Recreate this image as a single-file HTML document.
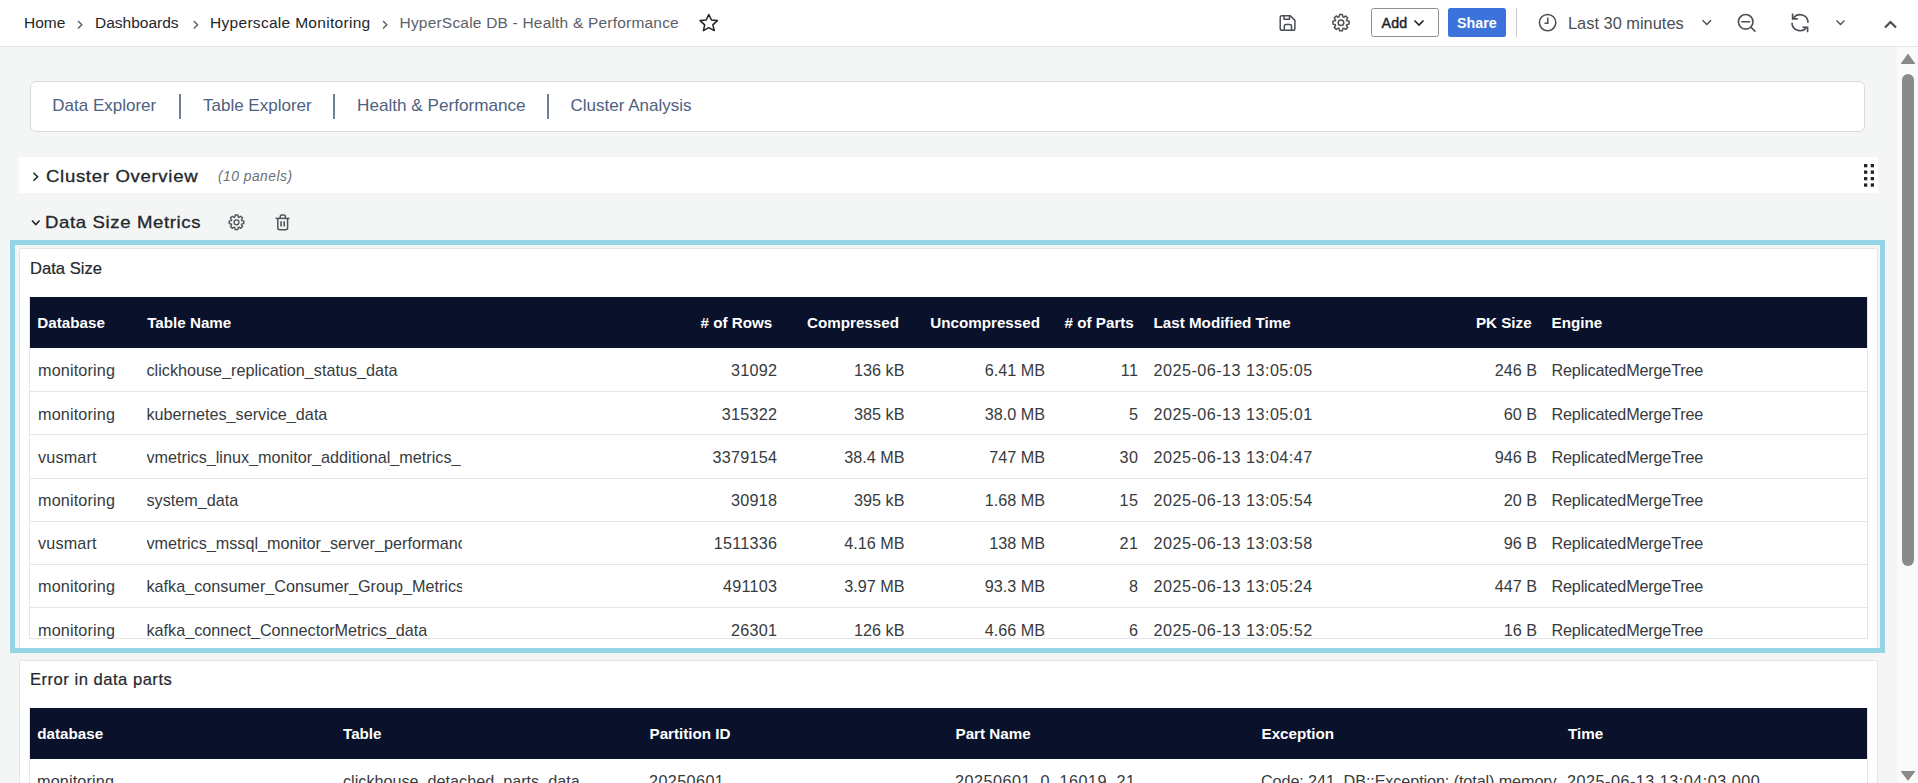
<!DOCTYPE html>
<html><head><meta charset="utf-8">
<style>
*{box-sizing:border-box;margin:0;padding:0}
html,body{width:1918px;height:783px;overflow:hidden;background:#f4f5f5;font-family:"Liberation Sans",sans-serif;color:#1f2328;position:relative}
.a{position:absolute;white-space:nowrap}
#hdr{position:absolute;left:0;top:0;width:1918px;height:47px;background:#fff;border-bottom:1px solid #e4e6e8}
.bc{font-size:15.5px;color:#22262a;top:14px;line-height:18px}
.sep{color:#555;}
.ico{position:absolute;overflow:visible}
.tabs{position:absolute;left:30px;top:81px;width:1835px;height:51px;background:#fff;border:1px solid #d6dae1;border-radius:6px}
.tab{font-size:17px;color:#4d6180;top:97.2px;line-height:18px}
.tdiv{position:absolute;top:94px;width:2px;height:25px;background:#6f7f94}
.row1{position:absolute;left:19px;top:157px;width:1859px;height:36px;background:#fff}
.sect{font-size:16.6px;color:#23272b;line-height:20px;letter-spacing:0.6px;-webkit-text-stroke:0.3px #23272b;transform:scaleX(1.12);transform-origin:0 0}
.panel{position:absolute;left:19px;width:1859px;background:#fff;border:1px solid #e3e5e6;border-radius:2px;overflow:hidden}
.ptitle{font-size:16.6px;color:#24282c;line-height:18px;-webkit-text-stroke:0.2px #24282c}
table{border-collapse:collapse;table-layout:fixed}
.tbl{position:absolute;left:29px;width:1838px;border-left:1px solid #e4e6e8;border-right:1px solid #e4e6e8}
.thd{position:absolute;background:#0a122b}
.th{font-size:15.2px;font-weight:bold;color:#fff;line-height:18px}
.td{font-size:16.2px;color:#373b40;line-height:18px}
.rs{position:absolute;height:1px;background:#e4e6e8}
</style></head><body>
<div id="hdr"></div>
<!-- breadcrumb -->
<div class="a bc" style="left:24px">Home</div>
<div class="a bc" style="left:95px">Dashboards</div>
<div class="a bc" style="left:210px;letter-spacing:0.3px">Hyperscale Monitoring</div>
<div class="a bc" style="left:399.5px;color:#5c6167;letter-spacing:0.2px">HyperScale DB - Health &amp; Performance</div>
<svg class="ico" style="left:0;top:0" width="1918" height="46">
  <g fill="none" stroke="#5a5e63" stroke-width="1.4">
    <path d="M78 21 L81.8 24.7 L78 28.4"/>
    <path d="M193.8 21 L197.6 24.7 L193.8 28.4"/>
    <path d="M383 21 L386.8 24.7 L383 28.4"/>
  </g>
  <path d="M708.75 14.5 L711.4 19.9 L717.4 20.6 L712.8 24.9 L714.3 30.6 L708.75 27.7 L703.4 30.6 L704.7 24.9 L700.1 20.6 L706.3 19.9 Z" fill="none" stroke="#1f2226" stroke-width="1.5" stroke-linejoin="round"/>
</svg>

<!-- header right -->
<svg class="ico" style="left:1260px;top:0" width="658" height="46" viewBox="1260 0 658 46">
  <g fill="none" stroke="#4b4f54" stroke-width="1.5" stroke-linejoin="round">
    <path d="M1282 15.8 H1290.3 L1294.9 20.4 V28.4 A1.8 1.8 0 0 1 1293.1 30.2 H1282 A1.8 1.8 0 0 1 1280.2 28.4 V17.6 A1.8 1.8 0 0 1 1282 15.8 Z"/>
    <path d="M1284 15.8 V19.3 H1289.5 V15.8"/>
    <path d="M1284.3 30.2 V26 A1.6 1.6 0 0 1 1285.9 24.4 H1289.9 A1.6 1.6 0 0 1 1291.5 26 V30.2"/>
  </g>
  <g id="gear1" transform="translate(1341 22.7)"><path fill="none" stroke="#4b4f54" stroke-width="1.5" stroke-linejoin="round" d="M-1.89 -5.80 L-1.42 -8.08 L1.42 -8.08 L1.89 -5.80 L2.77 -5.44 L4.70 -6.72 L6.72 -4.70 L5.44 -2.77 L5.80 -1.89 L8.08 -1.42 L8.08 1.42 L5.80 1.89 L5.44 2.77 L6.72 4.70 L4.70 6.72 L2.77 5.44 L1.89 5.80 L1.42 8.08 L-1.42 8.08 L-1.89 5.80 L-2.77 5.44 L-4.70 6.72 L-6.72 4.70 L-5.44 2.77 L-5.80 1.89 L-8.08 1.42 L-8.08 -1.42 L-5.80 -1.89 L-5.44 -2.77 L-6.72 -4.70 L-4.70 -6.72 L-2.77 -5.44 Z"/><circle r="2.8" fill="none" stroke="#4b4f54" stroke-width="1.5"/></g>
  <rect x="1371.5" y="8.5" width="67" height="28" rx="2" fill="#fff" stroke="#8d8f92"/>
  <rect x="1448" y="8" width="58" height="29" rx="2.5" fill="#3b72db"/>
  <path d="M1414.5 20.5 L1419 25 L1423.5 20.5" fill="none" stroke="#1f2328" stroke-width="1.6"/>
  <rect x="1516" y="8" width="1" height="29" fill="#c8cacd"/>
  <circle cx="1547.6" cy="22.6" r="8.2" fill="none" stroke="#4b4f54" stroke-width="1.5"/>
  <path d="M1547.8 17.5 V23.3 H1544.5" fill="none" stroke="#4b4f54" stroke-width="1.5"/>
  <path d="M1702.5 20.3 L1706.8 24.6 L1711.1 20.3" fill="none" stroke="#4b4f54" stroke-width="1.4"/>
  <circle cx="1745.7" cy="21.8" r="7.3" fill="none" stroke="#4b4f54" stroke-width="1.6"/>
  <path d="M1741.3 21.8 H1750.2 M1751 27.2 L1755.4 31.6" fill="none" stroke="#4b4f54" stroke-width="1.6"/>
  <path d="M1793.45 18.1 A8 8 0 0 1 1808 22.7" fill="none" stroke="#4b4f54" stroke-width="1.6"/>
  <path d="M1792 22.7 A8 8 0 0 0 1806.55 27.3" fill="none" stroke="#4b4f54" stroke-width="1.6"/>
  <path d="M1792.6 13.6 V18.9 H1797.8" fill="none" stroke="#4b4f54" stroke-width="1.6"/>
  <path d="M1802.4 27.2 H1807.6 V32.2" fill="none" stroke="#4b4f54" stroke-width="1.6"/>
  <path d="M1836.5 20.5 L1840.5 24.5 L1844.5 20.5" fill="none" stroke="#4b4f54" stroke-width="1.4"/>
  <path d="M1885 27.5 L1890.5 22 L1896 27.5" fill="none" stroke="#4b4f54" stroke-width="2.2"/>
</svg>
<div class="a" style="left:1381.5px;top:14.3px;font-size:14.2px;color:#1f2328;line-height:18px;-webkit-text-stroke:0.45px #1f2328;letter-spacing:0.25px">Add</div>
<div class="a" style="left:1457px;top:14px;font-size:14.3px;font-weight:bold;color:#fff;line-height:18px">Share</div>
<div class="a bc" style="left:1568px;color:#4b4f54;font-size:16.4px">Last 30 minutes</div>

<!-- scrollbar -->
<div style="position:absolute;left:1897px;top:47px;width:21px;height:736px;background:#fafafa"></div>
<div style="position:absolute;left:1902px;top:74px;width:12px;height:492px;border-radius:6px;background:#8a8a8a"></div>
<svg class="ico" style="left:1897px;top:47px" width="21" height="736" viewBox="1897 47 21 736">
  <path d="M1908 54.5 L1914.5 63.5 H1901.5 Z" fill="#8a8a8a" stroke="#8a8a8a" stroke-width="1.2" stroke-linejoin="round"/>
  <path d="M1908 780 L1914.5 771.5 H1901.5 Z" fill="#8a8a8a" stroke="#8a8a8a" stroke-width="1.2" stroke-linejoin="round"/>
</svg>

<!-- tabs -->
<div class="tabs"></div>
<div class="a tab" style="left:52.3px">Data Explorer</div>
<div class="tdiv" style="left:179px"></div>
<div class="a tab" style="left:203px">Table Explorer</div>
<div class="tdiv" style="left:333px"></div>
<div class="a tab" style="left:357px;font-size:17.15px;top:96.2px">Health &amp; Performance</div>
<div class="tdiv" style="left:547px"></div>
<div class="a tab" style="left:570.5px">Cluster Analysis</div>

<!-- rows -->
<div class="row1"></div>
<svg class="ico" style="left:0;top:150px" width="1918" height="95" viewBox="0 150 1918 95">
  <path d="M33.5 172.8 L37.6 176.8 L33.5 180.8" fill="none" stroke="#23272b" stroke-width="1.6"/>
  <path d="M32 220.5 L35.8 224.5 L39.6 220.5" fill="none" stroke="#23272b" stroke-width="1.6"/>
  <g fill="#242424">
    <rect x="1864" y="164" width="3.3" height="3.3"/><rect x="1870.7" y="164" width="3.3" height="3.3"/>
    <rect x="1864" y="170.5" width="3.3" height="3.3"/><rect x="1870.7" y="170.5" width="3.3" height="3.3"/>
    <rect x="1864" y="177" width="3.3" height="3.3"/><rect x="1870.7" y="177" width="3.3" height="3.3"/>
    <rect x="1864" y="183.4" width="3.3" height="3.3"/><rect x="1870.7" y="183.4" width="3.3" height="3.3"/>
  </g>
  <g id="gear2" transform="translate(236.5 222.3)"><path fill="none" stroke="#50555a" stroke-width="1.4" stroke-linejoin="round" d="M-1.70 -5.23 L-1.28 -7.29 L1.28 -7.29 L1.70 -5.23 L2.50 -4.90 L4.24 -6.06 L6.06 -4.24 L4.90 -2.50 L5.23 -1.70 L7.29 -1.28 L7.29 1.28 L5.23 1.70 L4.90 2.50 L6.06 4.24 L4.24 6.06 L2.50 4.90 L1.70 5.23 L1.28 7.29 L-1.28 7.29 L-1.70 5.23 L-2.50 4.90 L-4.24 6.06 L-6.06 4.24 L-4.90 2.50 L-5.23 1.70 L-7.29 1.28 L-7.29 -1.28 L-5.23 -1.70 L-4.90 -2.50 L-6.06 -4.24 L-4.24 -6.06 L-2.50 -4.90 Z"/><circle r="2.4" fill="none" stroke="#50555a" stroke-width="1.4"/></g>
  <g fill="none" stroke="#50555a" stroke-width="1.5" stroke-linejoin="round">
    <path d="M275.6 218.4 H289.5"/>
    <path d="M280.2 218.4 V216.5 A1.6 1.6 0 0 1 281.8 214.9 H283.8 A1.6 1.6 0 0 1 285.4 216.5 V218.4"/>
    <path d="M277.8 218.4 V227.8 A2 2 0 0 0 279.8 229.8 H285.6 A2 2 0 0 0 287.6 227.8 V218.4"/>
    <path d="M281.1 221.2 V226.6 M284.2 221.2 V226.6" stroke-width="1.6"/>
  </g>
</svg>
<div class="a sect" style="left:46px;top:167.3px">Cluster Overview</div>
<div class="a" style="left:218px;top:170px;font-size:13.8px;font-style:italic;color:#6a7077;line-height:14px;letter-spacing:0.5px">(10 panels)</div>
<div class="a sect" style="left:45px;top:212.6px;letter-spacing:0.55px">Data Size Metrics</div>









<!-- TABLES -->
<div class="panel" style="top:248px;height:405px"></div>
<div class="a ptitle" style="left:30px;top:259.9px">Data Size</div>
<div style="position:absolute;left:29px;top:297px;width:1839px;height:342px;border:1px solid #e4e6e8;border-top:none"></div>
<div class="thd" style="left:30px;top:297px;width:1837px;height:51px"></div>
<div class="a th" style="left:37.3px;top:313.7px">Database</div>
<div class="a th" style="left:147.2px;top:313.7px">Table Name</div>
<div class="a th" style="right:1145.7px;top:313.7px;text-align:right"># of Rows</div>
<div class="a th" style="right:1019px;top:313.7px;text-align:right">Compressed</div>
<div class="a th" style="right:878px;top:313.7px;text-align:right">Uncompressed</div>
<div class="a th" style="right:784.2px;top:313.7px;text-align:right"># of Parts</div>
<div class="a th" style="left:1153.5px;top:313.7px">Last Modified Time</div>
<div class="a th" style="right:386.4000000000001px;top:313.7px;text-align:right">PK Size</div>
<div class="a th" style="left:1551.5px;top:313.7px">Engine</div>
<div class="rs" style="left:30px;top:391px;width:1837px"></div>
<div class="rs" style="left:30px;top:434px;width:1837px"></div>
<div class="rs" style="left:30px;top:478px;width:1837px"></div>
<div class="rs" style="left:30px;top:521px;width:1837px"></div>
<div class="rs" style="left:30px;top:564px;width:1837px"></div>
<div class="rs" style="left:30px;top:607px;width:1837px"></div>
<div style="position:absolute;left:0;top:348px;width:1918px;height:300px">
<div class="a td" style="left:38px;top:13.4px;letter-spacing:0.15px">monitoring</div>
<div class="a td" style="left:146.5px;top:13.4px;width:315.5px;overflow:hidden">clickhouse_replication_status_data</div>
<div class="a td" style="right:1140.75px;top:13.4px;text-align:right;letter-spacing:0.25px">31092</div>
<div class="a td" style="right:1013.5px;top:13.4px;text-align:right">136 kB</div>
<div class="a td" style="right:873px;top:13.4px;text-align:right">6.41 MB</div>
<div class="a td" style="right:779.6px;top:13.4px;text-align:right;letter-spacing:0.4px">11</div>
<div class="a td" style="left:1153.5px;top:13.4px;letter-spacing:0.47px">2025-06-13 13:05:05</div>
<div class="a td" style="right:381px;top:13.4px;text-align:right">246 B</div>
<div class="a td" style="left:1551.5px;top:13.4px;letter-spacing:-0.18px">ReplicatedMergeTree</div>
<div class="a td" style="left:38px;top:56.9px;letter-spacing:0.15px">monitoring</div>
<div class="a td" style="left:146.5px;top:56.9px;width:315.5px;overflow:hidden">kubernetes_service_data</div>
<div class="a td" style="right:1140.75px;top:56.9px;text-align:right;letter-spacing:0.25px">315322</div>
<div class="a td" style="right:1013.5px;top:56.9px;text-align:right">385 kB</div>
<div class="a td" style="right:873px;top:56.9px;text-align:right">38.0 MB</div>
<div class="a td" style="right:779.6px;top:56.9px;text-align:right;letter-spacing:0.4px">5</div>
<div class="a td" style="left:1153.5px;top:56.9px;letter-spacing:0.47px">2025-06-13 13:05:01</div>
<div class="a td" style="right:381px;top:56.9px;text-align:right">60 B</div>
<div class="a td" style="left:1551.5px;top:56.9px;letter-spacing:-0.18px">ReplicatedMergeTree</div>
<div class="a td" style="left:38px;top:100.2px;letter-spacing:0.15px">vusmart</div>
<div class="a td" style="left:146.5px;top:100.2px;width:315.5px;overflow:hidden">vmetrics_linux_monitor_additional_metrics_</div>
<div class="a td" style="right:1140.75px;top:100.2px;text-align:right;letter-spacing:0.25px">3379154</div>
<div class="a td" style="right:1013.5px;top:100.2px;text-align:right">38.4 MB</div>
<div class="a td" style="right:873px;top:100.2px;text-align:right">747 MB</div>
<div class="a td" style="right:779.6px;top:100.2px;text-align:right;letter-spacing:0.4px">30</div>
<div class="a td" style="left:1153.5px;top:100.2px;letter-spacing:0.47px">2025-06-13 13:04:47</div>
<div class="a td" style="right:381px;top:100.2px;text-align:right">946 B</div>
<div class="a td" style="left:1551.5px;top:100.2px;letter-spacing:-0.18px">ReplicatedMergeTree</div>
<div class="a td" style="left:38px;top:143.4px;letter-spacing:0.15px">monitoring</div>
<div class="a td" style="left:146.5px;top:143.4px;width:315.5px;overflow:hidden">system_data</div>
<div class="a td" style="right:1140.75px;top:143.4px;text-align:right;letter-spacing:0.25px">30918</div>
<div class="a td" style="right:1013.5px;top:143.4px;text-align:right">395 kB</div>
<div class="a td" style="right:873px;top:143.4px;text-align:right">1.68 MB</div>
<div class="a td" style="right:779.6px;top:143.4px;text-align:right;letter-spacing:0.4px">15</div>
<div class="a td" style="left:1153.5px;top:143.4px;letter-spacing:0.47px">2025-06-13 13:05:54</div>
<div class="a td" style="right:381px;top:143.4px;text-align:right">20 B</div>
<div class="a td" style="left:1551.5px;top:143.4px;letter-spacing:-0.18px">ReplicatedMergeTree</div>
<div class="a td" style="left:38px;top:186.4px;letter-spacing:0.15px">vusmart</div>
<div class="a td" style="left:146.5px;top:186.4px;width:315.5px;overflow:hidden">vmetrics_mssql_monitor_server_performanc</div>
<div class="a td" style="right:1140.75px;top:186.4px;text-align:right;letter-spacing:0.25px">1511336</div>
<div class="a td" style="right:1013.5px;top:186.4px;text-align:right">4.16 MB</div>
<div class="a td" style="right:873px;top:186.4px;text-align:right">138 MB</div>
<div class="a td" style="right:779.6px;top:186.4px;text-align:right;letter-spacing:0.4px">21</div>
<div class="a td" style="left:1153.5px;top:186.4px;letter-spacing:0.47px">2025-06-13 13:03:58</div>
<div class="a td" style="right:381px;top:186.4px;text-align:right">96 B</div>
<div class="a td" style="left:1551.5px;top:186.4px;letter-spacing:-0.18px">ReplicatedMergeTree</div>
<div class="a td" style="left:38px;top:229.4px;letter-spacing:0.15px">monitoring</div>
<div class="a td" style="left:146.5px;top:229.4px;width:315.5px;overflow:hidden">kafka_consumer_Consumer_Group_Metrics_</div>
<div class="a td" style="right:1140.75px;top:229.4px;text-align:right;letter-spacing:0.25px">491103</div>
<div class="a td" style="right:1013.5px;top:229.4px;text-align:right">3.97 MB</div>
<div class="a td" style="right:873px;top:229.4px;text-align:right">93.3 MB</div>
<div class="a td" style="right:779.6px;top:229.4px;text-align:right;letter-spacing:0.4px">8</div>
<div class="a td" style="left:1153.5px;top:229.4px;letter-spacing:0.47px">2025-06-13 13:05:24</div>
<div class="a td" style="right:381px;top:229.4px;text-align:right">447 B</div>
<div class="a td" style="left:1551.5px;top:229.4px;letter-spacing:-0.18px">ReplicatedMergeTree</div>
<div class="a td" style="left:38px;top:273.2px;letter-spacing:0.15px">monitoring</div>
<div class="a td" style="left:146.5px;top:273.2px;width:315.5px;overflow:hidden">kafka_connect_ConnectorMetrics_data</div>
<div class="a td" style="right:1140.75px;top:273.2px;text-align:right;letter-spacing:0.25px">26301</div>
<div class="a td" style="right:1013.5px;top:273.2px;text-align:right">126 kB</div>
<div class="a td" style="right:873px;top:273.2px;text-align:right">4.66 MB</div>
<div class="a td" style="right:779.6px;top:273.2px;text-align:right;letter-spacing:0.4px">6</div>
<div class="a td" style="left:1153.5px;top:273.2px;letter-spacing:0.47px">2025-06-13 13:05:52</div>
<div class="a td" style="right:381px;top:273.2px;text-align:right">16 B</div>
<div class="a td" style="left:1551.5px;top:273.2px;letter-spacing:-0.18px">ReplicatedMergeTree</div>
</div>
<div class="panel" style="top:660px;height:140px"></div>
<div class="a ptitle" style="left:30px;top:671.1px;letter-spacing:0.5px">Error in data parts</div>
<div style="position:absolute;left:29px;top:708px;width:1839px;height:100px;border:1px solid #e4e6e8;border-top:none"></div>
<div class="thd" style="left:30px;top:708px;width:1837px;height:51px"></div>
<div class="a th" style="left:37.3px;top:724.7px">database</div>
<div class="a td" style="left:37px;top:771.9px;width:400px;overflow:hidden;letter-spacing:0.15px">monitoring</div>
<div class="a th" style="left:343px;top:724.7px">Table</div>
<div class="a td" style="left:343px;top:771.9px;width:400px;overflow:hidden;letter-spacing:0px">clickhouse_detached_parts_data</div>
<div class="a th" style="left:649.5px;top:724.7px">Partition ID</div>
<div class="a td" style="left:649px;top:771.9px;width:400px;overflow:hidden;letter-spacing:0.4px">20250601</div>
<div class="a th" style="left:955.5px;top:724.7px">Part Name</div>
<div class="a td" style="left:955px;top:771.9px;width:400px;overflow:hidden;letter-spacing:0.5px">20250601_0_16019_21</div>
<div class="a th" style="left:1261.5px;top:724.7px">Exception</div>
<div class="a td" style="left:1261px;top:771.9px;width:298px;overflow:hidden;letter-spacing:-0.1px">Code: 241. DB::Exception: (total) memory limit exceeded</div>
<div class="a th" style="left:1568px;top:724.7px">Time</div>
<div class="a td" style="left:1567px;top:771.9px;width:400px;overflow:hidden;letter-spacing:0.5px">2025-06-13 13:04:03.000</div>
<!-- /TABLES -->
<!-- blue outline -->
<div style="position:absolute;left:10px;top:240px;width:1875px;height:413px;border:5px solid #94d4e6"></div>
</body></html>
